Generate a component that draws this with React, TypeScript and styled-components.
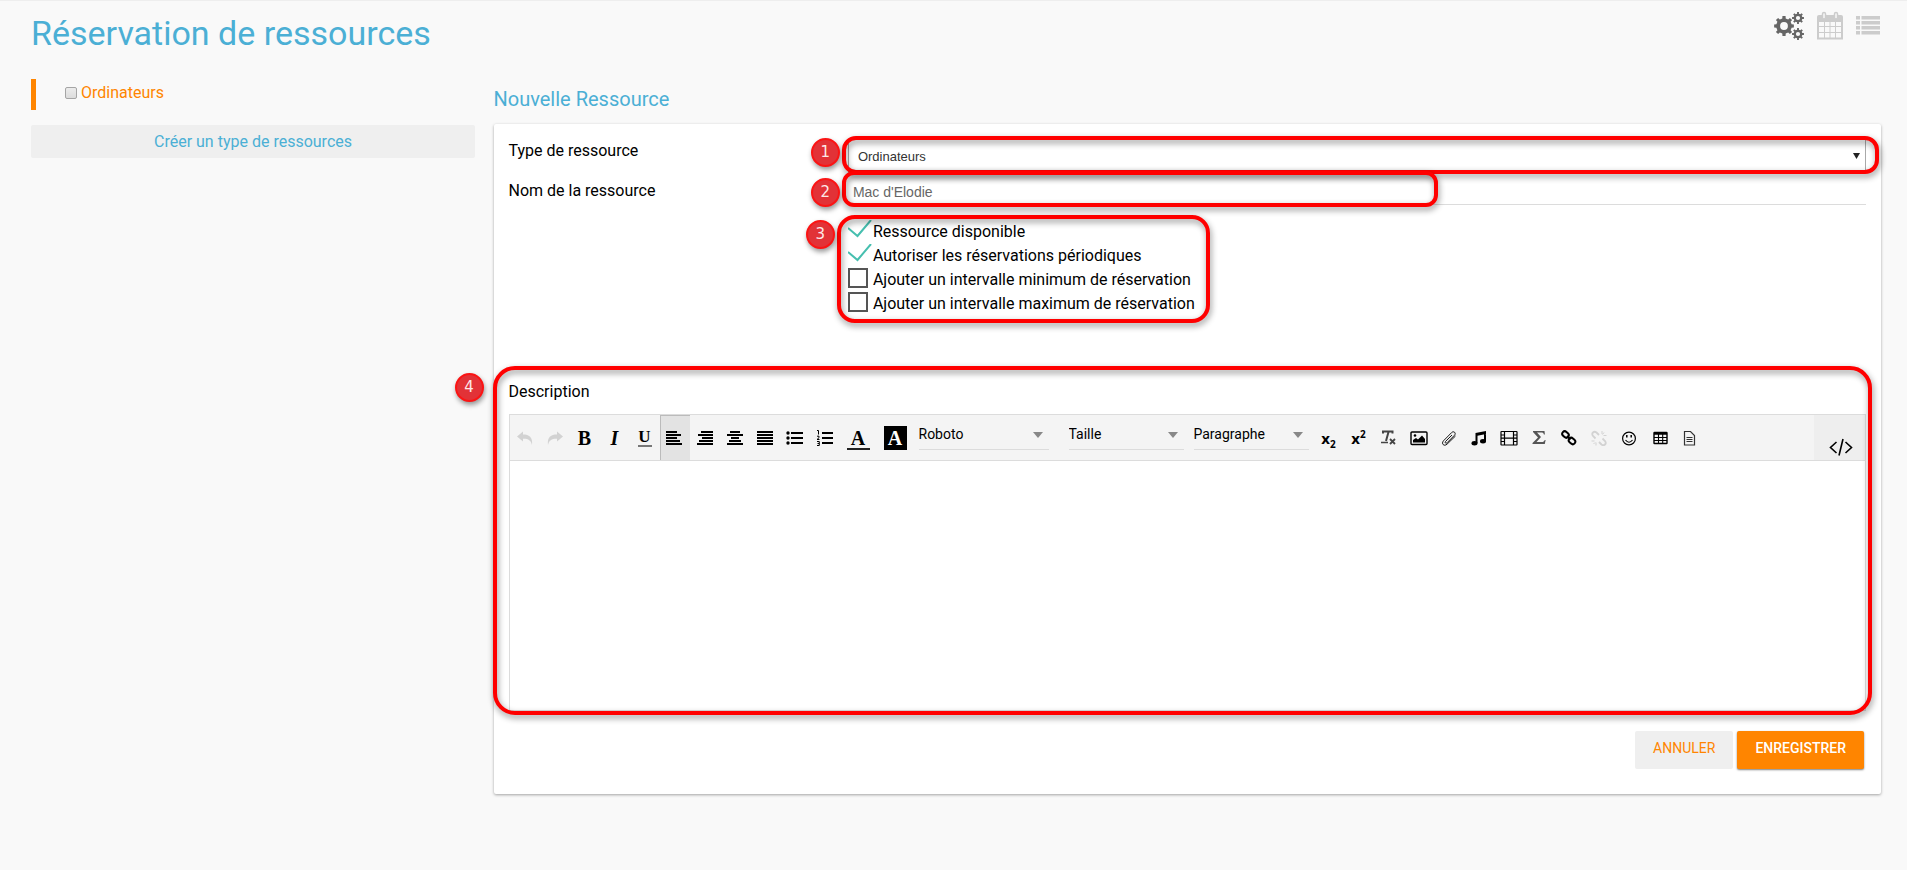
import React, { useState } from 'react';
import styled, { createGlobalStyle, css } from 'styled-components';

const blue = '#4bafd5';
const orange = '#ff8500';
const line = '#dcdcdc';

const GlobalStyle = createGlobalStyle`
  *, *::before, *::after { box-sizing: border-box; }
  body {
    margin: 0;
    min-height: 100vh;
    background: #f9f9f9;
    border-top: 1px solid #eee;
    color: #000;
    font: 16px/24px Roboto, "Liberation Sans", sans-serif;
  }
  button, input, select, textarea { font: inherit; color: inherit; }
  button { cursor: pointer; }
`;

const Page = styled.div`
  padding: 0 26px 32px 31px;
`;

const Header = styled.header`
  display: flex;
  justify-content: space-between;
  align-items: flex-start;
  padding: 10px 0 26px;
`;

const Title = styled.h1`
  margin: 2px 0 0;
  font-size: 34px;
  line-height: 40px;
  font-weight: 400;
  color: ${blue};
`;

const Views = styled.nav`
  display: flex;
  gap: 13px;
`;

const ViewButton = styled.button<{ $active?: boolean }>`
  display: flex;
  padding: 0;
  border: 0;
  background: none;
  color: ${(p) => (p.$active ? '#666' : '#ccc')};
`;

const Columns = styled.div`
  display: flex;
  justify-content: space-between;
  align-items: flex-start;
`;

const Sidebar = styled.aside`
  width: 24%;
`;

const Main = styled.main`
  width: 75%;
`;

const TypeItem = styled.label`
  display: flex;
  align-items: center;
  gap: 4px;
  height: 31px;
  margin-bottom: 15px;
  padding: 0 0 3px 29px;
  border-left: 5px solid ${orange};
  color: ${orange};
`;

const TypeCheck = styled.input`
  appearance: none;
  width: 12px;
  height: 12px;
  margin: 0;
  border: 1px solid #a5a5a5;
  border-radius: 2px;
  background: linear-gradient(#ececec, #dcdcdc);
  &:checked { background: ${orange}; }
`;

const CreateType = styled.button`
  width: 100%;
  height: 33px;
  border: 0;
  border-radius: 2px;
  background: #efefef;
  color: ${blue};
`;

const Subtitle = styled.h2`
  margin: 0 0 5px;
  font-size: 20px;
  line-height: 40px;
  font-weight: 400;
  color: ${blue};
`;

const Card = styled.form`
  padding: 15px 15px 25px;
  border-radius: 2px;
  background: #fff;
  box-shadow: 0 1px 3px rgba(0, 0, 0, 0.35);
`;

const Row = styled.div`
  display: flex;
  align-items: flex-start;
  margin-bottom: 6px;
`;

const RowLabel = styled.label`
  width: 25%;
`;

const RowControl = styled.div`
  position: relative;
  width: 75%;
`;

const TypeSelect = styled.select`
  display: block;
  appearance: none;
  width: 100%;
  height: 34px;
  padding: 0 24px 0 9px;
  border: 1px solid #a9a9a9;
  background: #fff;
  font: 13px "Liberation Sans", sans-serif;
  color: #333;
`;

const SelectArrow = styled.svg<{ $right: number }>`
  position: absolute;
  top: 50%;
  right: ${(p) => p.$right}px;
  transform: translateY(-50%);
  pointer-events: none;
`;

const NameInput = styled.input`
  display: block;
  width: 100%;
  height: 26px;
  padding: 0 5px;
  border: 0;
  border-bottom: 1px solid ${line};
  background: transparent;
  font: 14px "Liberation Sans", sans-serif;
  color: #666;
`;

const Options = styled.div`
  position: relative;
  width: fit-content;
  margin: 15px 0 64px 25%;
`;

const OptionRow = styled.label`
  display: flex;
  align-items: flex-start;
  height: 24px;
`;

const HiddenCheck = styled.input`
  appearance: none;
  position: absolute;
  width: 20px;
  height: 20px;
  margin: 0;
`;

const CheckDrawing = styled.svg`
  flex: none;
  width: 25px;
  height: 24px;
`;

const Description = styled.section`
  position: relative;
  margin-bottom: 20px;
`;

const DescriptionLabel = styled.label`
  display: block;
  margin-bottom: 10px;
`;

const Editor = styled.div`
  border: 1px solid ${line};
`;

const Toolbar = styled.div`
  display: flex;
  align-items: stretch;
  height: 46px;
  border-bottom: 1px solid ${line};
  background: #f4f4f4;
`;

const ToolButton = styled.button<{ $active?: boolean; $muted?: boolean; $wide?: boolean }>`
  display: flex;
  align-items: center;
  justify-content: center;
  flex: none;
  width: ${(p) => (p.$wide ? 37 : 30)}px;
  padding: 0;
  border: 0;
  background: none;
  color: ${(p) => (p.$muted ? '#d2d2d2' : '#000')};
  ${(p) =>
    p.$active &&
    css`
      background: #e3e3e3;
      box-shadow: inset 1px 1px 0 #bbb;
    `}
`;

const Letter = styled.span<{ $italic?: boolean; $line?: boolean; $inverse?: boolean }>`
  font: bold 20px/20px "Liberation Serif", serif;
  ${(p) => p.$italic && 'font-style: italic;'}
  ${(p) =>
    p.$line &&
    css`
      width: 23px;
      margin-top: 3px;
      border-bottom: 2px solid #222;
    `}
  ${(p) =>
    p.$inverse &&
    css`
      width: 23px;
      line-height: 24px;
      background: #000;
      color: #fff;
    `}
`;

const UnderlinedLetter = styled.span`
  width: 14px;
  border-bottom: 2px solid #777;
  font: bold 17px/16px "Liberation Serif", serif;
`;

const Script = styled.span`
  font: bold 15px/20px "Open Sans", sans-serif;
  sub, sup { font-size: 10px; line-height: 0; }
`;

const Pick = styled.div<{ $width: number; $gap: number }>`
  position: relative;
  flex: none;
  width: ${(p) => p.$width}px;
  height: 30px;
  margin: 5px 0 0 ${(p) => p.$gap}px;
  border-bottom: 1px solid ${line};
`;

const PickSelect = styled.select`
  display: block;
  appearance: none;
  width: 100%;
  height: 28px;
  padding: 0;
  border: 0;
  background: none;
  font-size: 14px;
`;

const Spacer = styled.div`
  width: 5px;
`;

const CodeButton = styled.button`
  width: 51px;
  margin-left: auto;
  padding: 18px 0 0 3px;
  border: 0;
  background: #eee;
  line-height: 0;
`;

const TextArea = styled.textarea`
  display: block;
  width: 100%;
  height: 249px;
  padding: 10px;
  border: 0;
  outline: 0;
  resize: none;
`;

const Actions = styled.div`
  display: flex;
  justify-content: flex-end;
  gap: 4px;
  padding-right: 2px;
`;

const ActionButton = styled.button<{ $primary?: boolean }>`
  height: 38px;
  padding: 0 18px 4px;
  border: 0;
  border-radius: 2px;
  background: ${(p) => (p.$primary ? orange : '#efefef')};
  color: ${(p) => (p.$primary ? '#fff' : orange)};
  font-size: 14px;
  font-weight: ${(p) => (p.$primary ? 500 : 400)};
  ${(p) => p.$primary && 'box-shadow: 0 1px 2px rgba(0, 0, 0, 0.5);'}
`;

const Outline = styled.div<{ $inset: string; $radius: number }>`
  position: absolute;
  inset: ${(p) => p.$inset};
  border: 4px solid #f00;
  border-radius: ${(p) => p.$radius}px;
  filter: drop-shadow(1px 3px 3px rgba(0, 0, 0, 0.45));
  pointer-events: none;
  z-index: 1;
`;

const Step = styled.span<{ $left: number; $top: number }>`
  position: absolute;
  left: ${(p) => p.$left}px;
  top: ${(p) => p.$top}px;
  width: 29px;
  height: 29px;
  border: 2px solid #fb1414;
  border-radius: 50%;
  background: #e23237;
  box-shadow: 1px 3px 5px rgba(0, 0, 0, 0.4);
  color: #fde8e8;
  font: 15px/25px "DejaVu Sans", sans-serif;
  text-align: center;
  z-index: 2;
`;

function gear(cx: number, cy: number, outer: number, inner: number, hole: number, teeth: number) {
  const points: string[] = [];
  const step = (Math.PI * 2) / teeth;
  const at = (r: number, a: number) =>
    `${(cx + r * Math.cos(a)).toFixed(2)} ${(cy + r * Math.sin(a)).toFixed(2)}`;
  for (let i = 0; i < teeth; i++) {
    const a = i * step;
    points.push(at(inner, a - step * 0.28), at(outer, a - step * 0.2), at(outer, a + step * 0.2), at(inner, a + step * 0.28));
  }
  return `M${points.join('L')}ZM${cx - hole} ${cy}a${hole} ${hole} 0 1 0 ${hole * 2} 0a${hole} ${hole} 0 1 0 ${-hole * 2} 0Z`;
}

const GearsIcon = () => (
  <svg width="30" height="30" viewBox="0 0 30 30" fill="currentColor" fillRule="evenodd">
    <path d={gear(10, 15, 10, 7.8, 3.9, 8)} />
    <path d={gear(24, 7, 6, 4.4, 2.1, 8)} />
    <path d={gear(24, 23, 6, 4.4, 2.1, 8)} />
  </svg>
);

const CalendarIcon = () => (
  <svg width="26" height="30" viewBox="0 0 26 30" fill="none" stroke="currentColor">
    <path d="M1 10V27.5H25V10" strokeWidth="2" />
    <path d="M7.5 10v17M13 10v17M18.5 10v17M1 15.5h24M1 21.5h24" />
    <path d="M2 4h22q2 0 2 2v5H0V6q0-2 2-2Z" fill="currentColor" stroke="none" />
    <rect x="5.5" y="1.5" width="3" height="6.5" rx="1.5" fill="#f9f9f9" strokeWidth="1.5" />
    <rect x="17.5" y="1.5" width="3" height="6.5" rx="1.5" fill="#f9f9f9" strokeWidth="1.5" />
  </svg>
);

const ListIcon = () => (
  <svg width="25" height="30" viewBox="0 0 25 30" fill="currentColor">
    {[5, 10, 15, 20].map((y) => (
      <path key={y} d={`M0 ${y}h4v3.500H0zM5.500 ${y}H24v3.500H5.500z`} />
    ))}
  </svg>
);

const Lines = ({ rows }: { rows: [number, number][] }) => (
  <svg width="18" height="16" viewBox="0 0 18 16" fill="currentColor">
    {rows.map(([x, w], i) => (
      <rect key={i} x={x} y={1 + i * 3} width={w} height="2" />
    ))}
  </svg>
);

const art = {
  undo: <path d="M1 6.500 7 1.500V4.500C13 4.500 17 7 16 15C15 10 12 8.500 7 8.700V11.500Z" fill="currentColor" />,
  redo: <path d="M17 6.500 11 1.500V4.500C5 4.500 1 7 2 15C3 10 6 8.500 11 8.700V11.500Z" fill="currentColor" />,
  bullets: (
    <g fill="currentColor">
      <circle cx="2" cy="3" r="1.7" /><circle cx="2" cy="8" r="1.7" /><circle cx="2" cy="13" r="1.7" />
      <path d="M5 2h12v2H5zM5 7h12v2H5zM5 12h12v2H5z" />
    </g>
  ),
  numbers: (
    <g>
      <path d="M6 2h11v2H6zM6 7h11v2H6zM6 12h11v2H6z" fill="currentColor" />
      <path d="M1 .5h1.500V4.500M1 6.200h2v1.500l-2 1.800h2.500M1 11.500h2.300v4H1M1.500 13.500h1.500" fill="none" stroke="currentColor" />
    </g>
  ),
  clear: (
    <g fill="none" stroke="#444">
      <path d="M3 3.500V1.500h9.500V3.500M8.500 2 6 11" strokeWidth="2" />
      <path d="M1 12.500h7" strokeWidth="1.500" />
      <path d="m10 9 5 5M15 9l-5 5" strokeWidth="1.800" />
    </g>
  ),
  image: (
    <g>
      <rect x="1" y="2" width="16" height="12.500" rx="1" fill="none" stroke="currentColor" strokeWidth="1.400" />
      <path d="M3 12.500V10l3-2 2 1.500 4-4 3 3.500v3.500Z" fill="currentColor" />
      <circle cx="5" cy="5.500" r="1.300" fill="currentColor" />
    </g>
  ),
  clip: (
    <path d="m12 4.500-6.500 6.500c-1 1.200.4 2.400 1.500 1.300l7.500-7.600c2-2.200-.8-4.600-2.800-2.700l-8.200 8.300c-2.600 3 .6 6 3.500 3.400L15.500 5.500" fill="none" stroke="currentColor" strokeWidth=".9" transform="translate(0 .5)" />
  ),
  music: (
    <g fill="currentColor">
      <path d="M5.500 3 16 1V4L7.500 5.700V13H5.500ZM14 3h2v8h-2z" />
      <ellipse cx="4.500" cy="13.200" rx="3" ry="2.200" /><ellipse cx="13" cy="11.200" rx="3" ry="2.200" />
    </g>
  ),
  film: (
    <g fill="none" stroke="currentColor" strokeWidth="1.200">
      <rect x="1" y="1.500" width="16" height="13.500" rx=".5" />
      <path d="M4.500 1.500V15M13.500 1.500V15M4.500 8.200h9M1 5h3.500M1 8.200h3.500M1 11.500h3.500M13.500 5H17M13.500 8.200H17M13.500 11.500H17" />
    </g>
  ),
  sigma: (
    <path d="M3 1h11.500l.4 3.500h-1C13.500 3 13 2.600 11 2.600H7l4 4.400-4.500 5H11.500c2 0 2.600-.6 3.200-2h.9L14.800 14H2.500v-1L8 7.500 3 2Z" fill="#555" />
  ),
  link: (
    <g fill="none" stroke="currentColor" strokeWidth="2">
      <rect x="-3.500" y="-2.500" width="7" height="5" rx="2.500" transform="translate(5.500 4.500) rotate(42)" />
      <rect x="-3.500" y="-2.500" width="7" height="5" rx="2.500" transform="translate(12 11) rotate(42)" />
      <path d="m7 6 3.500 3.500" />
    </g>
  ),
  unlink: (
    <g fill="none" stroke="currentColor" strokeWidth="1.800">
      <path d="m9 5 2.500-2.500q2-1.500 3.500 0t0 3.500L12.500 8.500M5.500 8.500 3 11q-1.500 2 0 3.500t3.500 0L9 12" transform="rotate(90 9 8.500)" />
      <path d="M12 1v3M16.500 5.500h-3M6 15.500v-3M1.500 11h3M14 2.500l-1.500 2M3.500 14l1.500-1.500" strokeWidth="1" />
    </g>
  ),
  smile: (
    <g fill="none" stroke="currentColor" strokeWidth="1.200">
      <circle cx="9" cy="8.500" r="6.400" />
      <path d="M5.500 10q3.500 4.500 7 0" />
      <path d="M6.800 5v2.500M11.200 5v2.500" strokeWidth="1.500" />
    </g>
  ),
  table: (
    <g fill="none" stroke="currentColor" transform="translate(2 0)">
      <rect x="2" y="2.500" width="13" height="11" rx=".5" strokeWidth="1.400" />
      <path d="M2 3.500h13" strokeWidth="2.500" />
      <path d="M6.500 3v10.500M10.700 3v10.500M2 7.500h13M2 10.500h13" strokeWidth="1.100" />
    </g>
  ),
  page: (
    <g fill="none" stroke="#333" strokeWidth="1.200" transform="translate(1 0)">
      <path d="M3.500 1.500h6l4 4v9.500h-10Z" />
      <path d="M5.500 7.500h6M5.500 9.500h6M5.500 11.500h6" />
    </g>
  ),
};

const Art = ({ name }: { name: keyof typeof art }) => (
  <svg width="18" height="16" viewBox="0 0 18 16">{art[name]}</svg>
);

const Triangle = ({ size, color, right }: { size: number; color: string; right: number }) => (
  <SelectArrow $right={right} width={size} height="6" viewBox="0 0 10 6" preserveAspectRatio="none" fill={color}>
    <path d="M0 0h10L5 6Z" />
  </SelectArrow>
);

const aligns: { label: string; rows: [number, number][] }[] = [
  { label: 'Aligner à gauche', rows: [[0, 11], [0, 15], [0, 11], [0, 14], [0, 16]] },
  { label: 'Aligner à droite', rows: [[5, 12], [2, 15], [6, 11], [3, 14], [1, 16]] },
  { label: 'Centrer', rows: [[4, 10], [1, 16], [5, 8], [3, 12], [1, 16]] },
  { label: 'Justifier', rows: [[1, 16], [1, 16], [1, 16], [1, 16], [1, 16]] },
];

const inserts: { label: string; name: keyof typeof art; muted?: boolean }[] = [
  { label: 'Effacer la mise en forme', name: 'clear' },
  { label: 'Image', name: 'image' },
  { label: 'Pièce jointe', name: 'clip' },
  { label: 'Son', name: 'music' },
  { label: 'Vidéo', name: 'film' },
  { label: 'Formule', name: 'sigma' },
  { label: 'Lien', name: 'link' },
  { label: 'Supprimer le lien', name: 'unlink', muted: true },
  { label: 'Émoticône', name: 'smile' },
  { label: 'Tableau', name: 'table' },
  { label: 'Modèle', name: 'page' },
];

function ToolbarPick({ label, width, gap }: { label: string; width: number; gap: number }) {
  return (
    <Pick $width={width} $gap={gap}>
      <PickSelect aria-label={label}>
        <option>{label}</option>
      </PickSelect>
      <Triangle size={10} color="#888" right={6} />
    </Pick>
  );
}

function Option({ label, initial }: { label: string; initial: boolean }) {
  const [on, setOn] = useState(initial);
  return (
    <OptionRow>
      <HiddenCheck type="checkbox" checked={on} onChange={() => setOn(!on)} />
      <CheckDrawing viewBox="0 0 25 24" fill="none" strokeWidth="2" aria-hidden>
        {on ? <path d="M0 8l9.500 8L23 0" stroke="#46bfaf" /> : <rect x="1" y="1" width="18" height="18" stroke="#555" />}
      </CheckDrawing>
      {label}
    </OptionRow>
  );
}

export default function App() {
  return (
    <>
      <GlobalStyle />
      <Page>
        <Header>
          <Title>Réservation de ressources</Title>
          <Views>
            <ViewButton $active aria-label="Gestion"><GearsIcon /></ViewButton>
            <ViewButton aria-label="Calendrier"><CalendarIcon /></ViewButton>
            <ViewButton aria-label="Liste"><ListIcon /></ViewButton>
          </Views>
        </Header>
        <Columns>
          <Sidebar>
            <TypeItem>
              <TypeCheck type="checkbox" />
              Ordinateurs
            </TypeItem>
            <CreateType>Créer un type de ressources</CreateType>
          </Sidebar>
          <Main>
            <Subtitle>Nouvelle Ressource</Subtitle>
            <Card onSubmit={(e) => e.preventDefault()}>
              <Row>
                <RowLabel htmlFor="type">Type de ressource</RowLabel>
                <RowControl>
                  <TypeSelect id="type">
                    <option>Ordinateurs</option>
                  </TypeSelect>
                  <Triangle size={7} color="#222" right={6} />
                  <Outline $inset="-3px -13px -1px -6px" $radius={14} />
                  <Step $left={-37} $top={-1}>1</Step>
                </RowControl>
              </Row>
              <Row>
                <RowLabel htmlFor="name">Nom de la ressource</RowLabel>
                <RowControl>
                  <NameInput id="name" defaultValue="Mac d'Elodie" />
                  <Outline $inset="-8px 42% -2px -6px" $radius={12} />
                  <Step $left={-37} $top={-1}>2</Step>
                </RowControl>
              </Row>
              <Options>
                <Option label="Ressource disponible" initial />
                <Option label="Autoriser les réservations périodiques" initial />
                <Option label="Ajouter un intervalle minimum de réservation" initial={false} />
                <Option label="Ajouter un intervalle maximum de réservation" initial={false} />
                <Outline $inset="-5px -15px -7px -11px" $radius={18} />
                <Step $left={-42} $top={0}>3</Step>
              </Options>
              <Description>
                <DescriptionLabel htmlFor="description">Description</DescriptionLabel>
                <Editor>
                  <Toolbar>
                    <ToolButton type="button" $muted aria-label="Annuler la saisie"><Art name="undo" /></ToolButton>
                    <ToolButton type="button" $muted aria-label="Rétablir"><Art name="redo" /></ToolButton>
                    <ToolButton type="button"><Letter>B</Letter></ToolButton>
                    <ToolButton type="button"><Letter $italic>I</Letter></ToolButton>
                    <ToolButton type="button"><UnderlinedLetter>U</UnderlinedLetter></ToolButton>
                    {aligns.map((a, i) => (
                      <ToolButton type="button" key={a.label} $active={i === 0} aria-label={a.label}>
                        <Lines rows={a.rows} />
                      </ToolButton>
                    ))}
                    <ToolButton type="button" aria-label="Liste à puces"><Art name="bullets" /></ToolButton>
                    <ToolButton type="button" aria-label="Liste numérotée"><Art name="numbers" /></ToolButton>
                    <ToolButton type="button" $wide><Letter $line>A</Letter></ToolButton>
                    <ToolButton type="button" $wide><Letter $inverse>A</Letter></ToolButton>
                    <ToolbarPick label="Roboto" width={130} gap={5} />
                    <ToolbarPick label="Taille" width={115} gap={20} />
                    <ToolbarPick label="Paragraphe" width={115} gap={10} />
                    <Spacer />
                    <ToolButton type="button"><Script>x<sub>2</sub></Script></ToolButton>
                    <ToolButton type="button"><Script>x<sup>2</sup></Script></ToolButton>
                    {inserts.map((t) => (
                      <ToolButton type="button" key={t.name} $muted={t.muted} aria-label={t.label}>
                        <Art name={t.name} />
                      </ToolButton>
                    ))}
                    <CodeButton type="button" aria-label="Code source">
                      <svg width="24" height="18" viewBox="0 0 24 18" fill="none" stroke="currentColor" strokeWidth="1.600">
                        <path d="M7.500 4 1.500 9.500l6 5.500M16.500 4l6 5.500-6 5.500M14 1l-4 16.500" />
                      </svg>
                    </CodeButton>
                  </Toolbar>
                  <TextArea id="description" />
                </Editor>
                <Outline $inset="-14px -6px -4px -16px" $radius={22} />
                <Step $left={-54} $top={-7}>4</Step>
              </Description>
              <Actions>
                <ActionButton type="button">ANNULER</ActionButton>
                <ActionButton type="submit" $primary>ENREGISTRER</ActionButton>
              </Actions>
            </Card>
          </Main>
        </Columns>
      </Page>
    </>
  );
}
